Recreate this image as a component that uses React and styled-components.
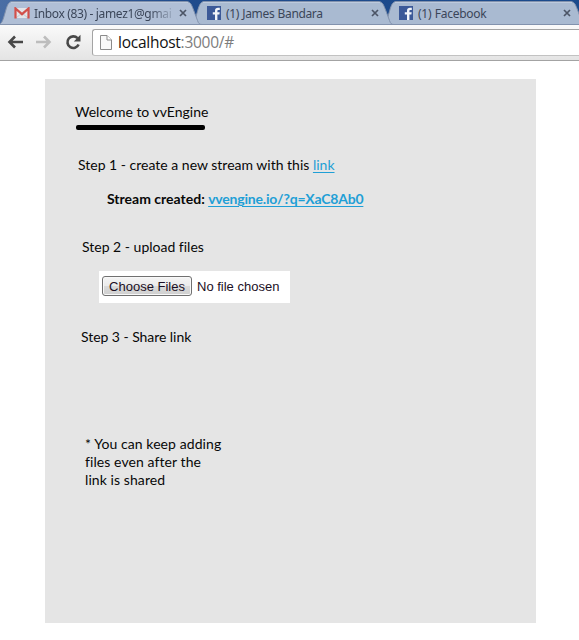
import React from "react";
import styled, { createGlobalStyle } from "styled-components";

const GlobalStyle = createGlobalStyle`
  * { box-sizing: border-box; }
  body { margin: 0; background: #fff; overflow: hidden; }
`;

const Window = styled.div`
  width: 579px;
  height: 640px;
  overflow: hidden;
  background: #fff;
`;

const TabStrip = styled.div`
  display: flex;
  height: 25px;
  padding-top: 1px;
  overflow: hidden;
  background: linear-gradient(90deg, #4a6ea5 0, #1f4b8c 180px, #1a4a8c 100%);
`;

const Tab = styled.div`
  position: relative;
  z-index: ${(p) => p.$order};
  flex: none;
  display: flex;
  align-items: center;
  width: 203px;
  height: 24px;
  margin-left: ${(p) => p.$overlap}px;
  padding: 0 15px 0 ${(p) => p.$pad}px;
  font: 12px "Noto Sans", "Open Sans", sans-serif;
  color: #3b4659;
`;

const TabShape = styled.svg`
  position: absolute;
  inset: 0;
  z-index: -1;
`;

const TabTitle = styled.span`
  flex: 1;
  margin-left: ${(p) => (p.$fade ? 4 : 5)}px;
  white-space: nowrap;
  letter-spacing: ${(p) => p.$spacing}px;
  word-spacing: ${(p) => (p.$fade ? 0 : 0.5)}px;
  ${(p) => p.$fade && "mask-image: linear-gradient(90deg, #000 84%, rgba(0, 0, 0, 0.25) 98%);"}
`;

const CloseIcon = styled.svg`
  flex: none;
  margin-left: 7px;
`;

const Toolbar = styled.div`
  display: flex;
  align-items: center;
  height: 36px;
  padding-left: 7px;
  background: linear-gradient(#fafafa, #e4e4e4);
  border-bottom: 1px solid #a3a3a3;
`;

const NavIcon = styled.svg`
  flex: none;
  margin: -1px ${(p) => p.$gap}px 0 0;
`;

const AddressBar = styled.div`
  flex: 1;
  display: flex;
  align-items: center;
  height: 27px;
  margin-top: -1px;
  padding-left: 7px;
  background: #fff;
  border: 1px solid #a4a4a4;
  border-bottom-color: #c2c2c2;
  border-right: 0;
  border-radius: 3px 0 0 3px;
`;

const Url = styled.div`
  margin-left: 6px;
  font: 15.5px "Open Sans", "Noto Sans", sans-serif;
  letter-spacing: -0.26px;
  color: #111;
`;

const UrlRest = styled.span`
  color: #7d7d7d;
`;

const Panel = styled.main`
  width: 491px;
  height: 544px;
  margin: 18px 0 0 45px;
  padding-top: 24px;
  background: #e5e5e5;
  font-family: Lato, "Liberation Sans", sans-serif;
  font-size: 14px;
  font-variant-ligatures: none;
  line-height: 18px;
  color: #080808;
`;

const Line = styled.div`
  margin: ${(p) => p.$top}px 0 0 ${(p) => p.$left}px;
  white-space: nowrap;
  letter-spacing: ${(p) => p.$spacing || 0}px;
  font-weight: ${(p) => (p.$bold ? 700 : 400)};
`;

const Rule = styled.div`
  width: 129px;
  height: 5px;
  margin: 4px 0 0 31px;
  border-radius: 2px;
  background: #000;
`;

const Link = styled.a`
  color: #1f9fd6;
  text-decoration: underline;
  text-underline-offset: 2px;
  text-decoration-thickness: 1px;
  letter-spacing: ${(p) => p.$spacing || 0}px;
`;

const FilePicker = styled.div`
  display: flex;
  align-items: center;
  width: 191px;
  height: 32px;
  margin: 15px 0 0 54px;
  padding: 0 0 2px 3px;
  background: #fff;
  font: 13px "Liberation Sans", Arial, sans-serif;
  color: #1b0f24;
`;

const FileButton = styled.button`
  width: 90px;
  height: 20px;
  padding: 0;
  border: 1px solid #707070;
  border-radius: 3px;
  background: linear-gradient(#f4f4f4 0, #ebebeb 48%, #dadada 52%, #cfcfcf 100%);
  box-shadow: inset 0 0 0 1px #f8f8f8;
  font: inherit;
  color: inherit;
`;

const FileStatus = styled.span`
  margin-left: 5px;
  white-space: nowrap;
`;

function Gmail() {
  return (
    <svg width="16" height="12" viewBox="0 0 16 12">
      <path d="M1 1h14v10H1z" fill="#e3e4e8" />
      <path d="M2 11l6-5 6 5" fill="none" stroke="#c3c6ce" />
      <path d="M1.500 11.500V1.500L8 7.200l6.500-5.700v10" fill="none" stroke="#d2504b" strokeWidth="2.200" />
    </svg>
  );
}

function Facebook() {
  return (
    <svg width="14" height="14" viewBox="0 0 14 14">
      <path d="M0 0h14v14H0z" fill="#3b5998" />
      <path d="M8 14V8.500H5.800V6.300H8V4.700C8 2.700 9.200 1.800 11 1.800h1.800V4h-1.300c-.8 0-1.100.3-1.100 1v1.300h2.300l-.3 2.200h-2V14z" fill="#f2f5fa" />
    </svg>
  );
}

function BrowserTab({ icon, title, order, overlap, pad, spacing, fade }) {
  return (
    <Tab $order={order} $overlap={overlap} $pad={pad}>
      <TabShape width="203" height="24" viewBox="0 0 203 24">
        <path
          d="M0 23.500C3 22.500 4 19 6 12S9 1 13 .5H187c4 0 5 2 7 7l4.500 12c1 3 2 4 4.500 4z"
          fill={fade ? "#b0bfd6" : "#a9bad1"}
          stroke="#8292ad"
        />
        <path d="M12 1.500H189" stroke="#bdcadd" />
      </TabShape>
      {icon}
      <TabTitle $spacing={spacing} $fade={fade}>{title}</TabTitle>
      <CloseIcon width="8" height="8" viewBox="0 0 8 8">
        <path d="M1 1l6 6M7 1L1 7" stroke="#4c5566" strokeWidth="1.700" />
      </CloseIcon>
    </Tab>
  );
}

export default function App() {
  return (
    <Window>
      <GlobalStyle />
      <TabStrip>
        <BrowserTab icon={<Gmail />} title="Inbox (83) - jamez1@gmai" order={3} overlap={-1} pad={15} spacing={-0.35} fade />
        <BrowserTab icon={<Facebook />} title="(1) James Bandara" order={2} overlap={-11} pad={16} spacing={-0.35} />
        <BrowserTab icon={<Facebook />} title="(1) Facebook" order={1} overlap={-11} pad={16} spacing={-0.25} />
      </TabStrip>
      <Toolbar>
        <NavIcon $gap={13} width="16" height="14" viewBox="0 0 16 14">
          <path d="M8 1.500L2.500 7 8 12.500M3 7h13" fill="none" stroke="#484848" strokeWidth="2.600" />
        </NavIcon>
        <NavIcon $gap={13} width="16" height="14" viewBox="0 0 16 14">
          <path d="M8 1.500L13.500 7 8 12.500M13 7H0" fill="none" stroke="#bdbdbd" strokeWidth="2.600" />
        </NavIcon>
        <NavIcon $gap={11} width="16" height="16" viewBox="0 0 16 16">
          <path d="M12.500 4.200A5.800 5.800 0 1 0 13.600 10.500" fill="none" stroke="#484848" strokeWidth="2.600" />
          <path d="M15.500.8v6.700H8.800z" fill="#484848" />
        </NavIcon>
        <AddressBar>
          <svg width="12" height="15" viewBox="0 0 12 15">
            <path d="M.5.5h6.500l4.500 4.500v9.500H.5z" fill="#f8f8f8" stroke="#8b8b8b" />
            <path d="M7 .5V5h4.500" fill="#fff" stroke="#8b8b8b" />
          </svg>
          <Url>localhost<UrlRest>:3000/#</UrlRest></Url>
        </AddressBar>
      </Toolbar>
      <Panel>
        <Line $top={0} $left={30}>Welcome to vvEngine</Line>
        <Rule />
        <Line $top={26} $left={33}>
          Step 1 - create a new stream with this <Link>link</Link>
        </Line>
        <Line $top={16} $left={62} $bold>
          Stream created: <Link $spacing={-0.2}>vvengine.io/?q=XaC8Ab0</Link>
        </Line>
        <Line $top={30} $left={37}>Step 2 - upload files</Line>
        <FilePicker>
          <FileButton>Choose Files</FileButton>
          <FileStatus>No file chosen</FileStatus>
        </FilePicker>
        <Line $top={25} $left={36} $spacing={-0.05}>Step 3 - Share link</Line>
        <Line $top={89} $left={40} $spacing={0.08}>
          * You can keep adding
          <br />
          files even after the
          <br />
          link is shared
        </Line>
      </Panel>
    </Window>
  );
}
